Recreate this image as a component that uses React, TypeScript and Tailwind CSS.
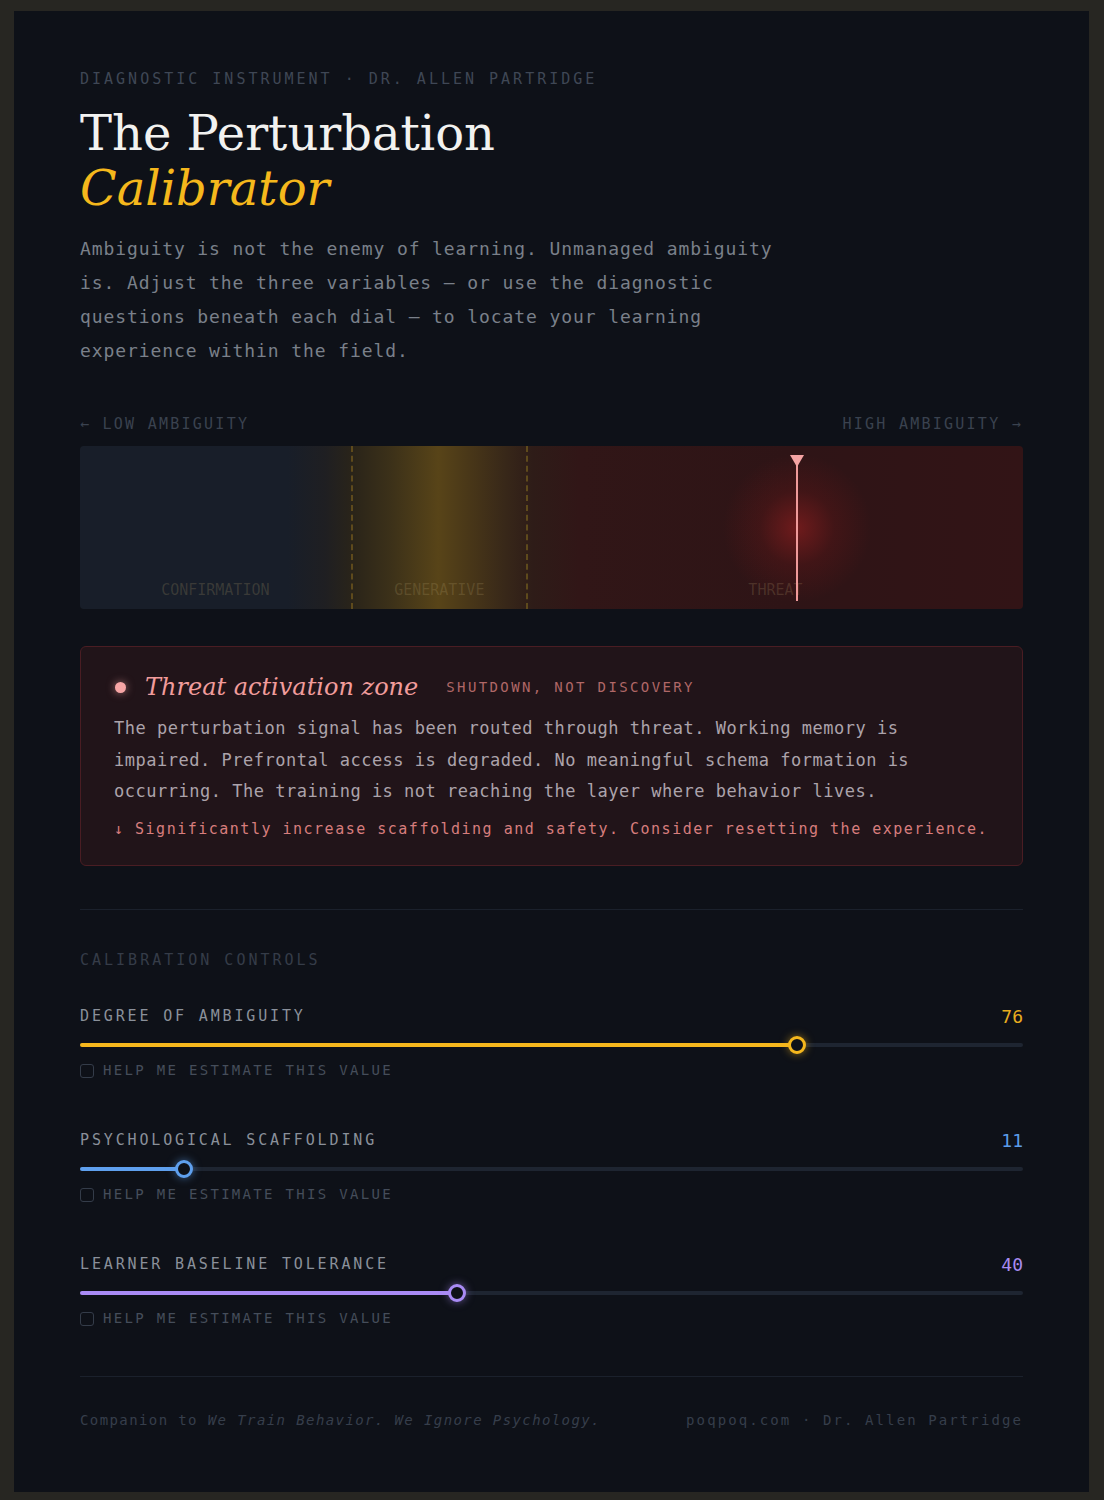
import React from 'react';

const MONO = "font-['DejaVu_Sans_Mono',monospace]";
const SERIF = "font-['DejaVu_Serif',serif]";

type Dial = {
  label: string;
  value: number;
  fill: string;
  text: string;
  thumb: string;
};

const dials: Dial[] = [
  {
    label: 'Degree of Ambiguity',
    value: 76,
    fill: 'bg-[#f5b71d]',
    text: 'text-[#e8ad1f]',
    thumb: 'border-[#f5b71d] shadow-[0_0_8px_rgba(245,183,29,0.55)]'
  },
  {
    label: 'Psychological Scaffolding',
    value: 11,
    fill: 'bg-[#5fa0ee]',
    text: 'text-[#5c9ce8]',
    thumb: 'border-[#5fa0ee] shadow-[0_0_8px_rgba(95,160,238,0.55)]'
  },
  {
    label: 'Learner Baseline Tolerance',
    value: 40,
    fill: 'bg-[#a98bf5]',
    text: 'text-[#a78bf0]',
    thumb: 'border-[#a98bf5] shadow-[0_0_8px_rgba(169,139,245,0.55)]'
  }
];

const DialControl = ({ dial }: { dial: Dial }) => {
  return (
    <div>
      <div className="flex h-[20px] items-center justify-between">
        <span className={`${MONO} text-[15px] uppercase tracking-[0.19em] text-[#8a909a]`}>{dial.label}</span>
        <span className={`${MONO} text-[18px] ${dial.text}`}>{dial.value}</span>
      </div>
      <div className="relative mt-[9px] flex h-[18px] items-center">
        <div className="h-1 w-full rounded-full bg-[#1e2531]">
          <div className={`h-1 rounded-full ${dial.fill}`} style={{ width: `${dial.value}%` }} />
        </div>
        <div
          className={`absolute top-0 h-[18px] w-[18px] -translate-x-1/2 rounded-full border-[3px] bg-[#0e1118] ${dial.thumb}`}
          style={{ left: `${dial.value}%` }}
        />
      </div>
      <label className="mt-[9px] flex h-[16px] items-center gap-[9px]">
        <span className="h-[14px] w-[14px] rounded-[3px] border border-[#343c49]" />
        <span className={`${MONO} text-[14px] uppercase tracking-[0.165em] text-[#454d5a]`}>
          Help me estimate this value
        </span>
      </label>
    </div>
  );
};

const Spectrum = () => {
  return (
    <div className="relative mt-[14px] h-[163px] overflow-hidden rounded-[4px] bg-[linear-gradient(to_right,#181e29_0%,#181e29_22%,#1f1f22_26%,#2a2419_29%,#3c3119_33%,#584418_38%,#4a3818_41%,#382819_45%,#2e1c18_48%,#311617_53%,#2e1416_75%,#321416_100%)]">
      <div className="flex h-full">
        <div className="flex w-[28.7%] items-end justify-center pb-[8px]">
          <span className={`${MONO} text-[15px] text-[rgba(180,160,110,0.22)]`}>CONFIRMATION</span>
        </div>
        <div className="flex w-[18.8%] items-end justify-center border-x-2 border-dashed border-[#5e4a1c] pb-[8px]">
          <span className={`${MONO} text-[15px] text-[rgba(180,160,110,0.22)]`}>GENERATIVE</span>
        </div>
        <div className="flex flex-1 items-end justify-center pb-[8px]">
          <span className={`${MONO} text-[15px] text-[rgba(180,160,110,0.22)]`}>THREAT</span>
        </div>
      </div>
      {/* marker */}
      <div className="absolute top-0 h-full w-0" style={{ left: '76%' }}>
        <div className="absolute left-[-75px] top-[7px] h-[150px] w-[150px] rounded-full bg-[radial-gradient(circle,rgba(190,35,35,0.45)_0%,rgba(150,25,25,0.18)_35%,transparent_70%)]" />
        <div className="absolute left-[-1px] top-[10px] h-[145px] w-[2px] bg-[#ef9a9a]" />
        <svg className="absolute left-[-7px] top-[9px]" width="14" height="12" viewBox="0 0 14 12">
          <polygon points="0,0 14,0 7,12" fill="#f4a3a3" />
        </svg>
      </div>
    </div>
  );
};

export default function App() {
  return (
    <div className="min-h-screen bg-[#272622] pb-[8px] pl-[14px] pr-[15px] pt-[11px]">
      <div className="bg-[#0e1118] px-[66px] pb-[62px] pt-[60px]">
        <p className={`${MONO} h-[16px] text-[15px] leading-[16px] tracking-[0.2em] text-[#3f4755]`}>
          DIAGNOSTIC INSTRUMENT · DR. ALLEN PARTRIDGE
        </p>
        <h1 className={`${SERIF} mt-[19px] text-[48px] leading-[55px] text-[#f2f2f0]`}>
          The Perturbation
          <br />
          <em className="text-[#f5b81c]">Calibrator</em>
        </h1>
        <p className={`${MONO} mt-[16px] max-w-[720px] text-[18px] leading-[34px] tracking-[0.05em] text-[#7a808a]`}>
          Ambiguity is not the enemy of learning. Unmanaged ambiguity is. Adjust the three variables — or use the
          diagnostic questions beneath each dial — to locate your learning experience within the field.
        </p>

        <div className={`${MONO} mt-[48px] flex h-[16px] justify-between text-[15px] leading-[16px] tracking-[0.15em] text-[#3a424f]`}>
          <span>← LOW AMBIGUITY</span>
          <span>HIGH AMBIGUITY →</span>
        </div>
        <Spectrum />

        <div className="mt-[37px] rounded-[6px] border border-[#4a1d23] bg-[#211419] px-[33px] pb-[26px] pt-[24px]">
          <div className="flex h-[32px] items-center">
            <span className="ml-[1px] h-[11px] w-[11px] rounded-full bg-[#f6a5a5] shadow-[0_0_8px_rgba(246,165,165,0.6)]" />
            <span className={`${SERIF} ml-[19px] text-[24px] italic text-[#f19c9c]`}>Threat activation zone</span>
            <span className={`${MONO} ml-[28px] text-[14px] tracking-[0.17em] text-[#b06767]`}>
              SHUTDOWN, NOT DISCOVERY
            </span>
          </div>
          <p className={`${MONO} mt-[10px] max-w-[820px] text-[17px] leading-[31.5px] tracking-[0.03em] text-[#aca3ab]`}>
            The perturbation signal has been routed through threat. Working memory is impaired. Prefrontal access is
            degraded. No meaningful schema formation is occurring. The training is not reaching the layer where
            behavior lives.
          </p>
          <p className={`${MONO} mt-[11px] text-[15px] leading-[20px] tracking-[0.1em] text-[#d77d7d]`}>
            ↓ Significantly increase scaffolding and safety. Consider resetting the experience.
          </p>
        </div>

        <div className="mt-[43px] h-px bg-[#1b212c]" />

        <p className={`${MONO} mt-[42px] h-[16px] text-[15px] leading-[16px] tracking-[0.2em] text-[#353c48]`}>
          CALIBRATION CONTROLS
        </p>

        <div className="mt-[39px] flex flex-col gap-[52px]">
          {dials.map((d) => (
            <DialControl key={d.label} dial={d} />
          ))}
        </div>

        <div className="mt-[49px] h-px bg-[#1b212c]" />

        <div className={`${MONO} mt-[35px] flex h-[18px] items-center justify-between text-[14px] text-[#363e4b]`}>
          <span className="tracking-[0.1em]">
            Companion to <em>We Train Behavior. We Ignore Psychology.</em>
          </span>
          <span className="tracking-[0.15em]">poqpoq.com · Dr. Allen Partridge</span>
        </div>
      </div>
    </div>
  );
}
